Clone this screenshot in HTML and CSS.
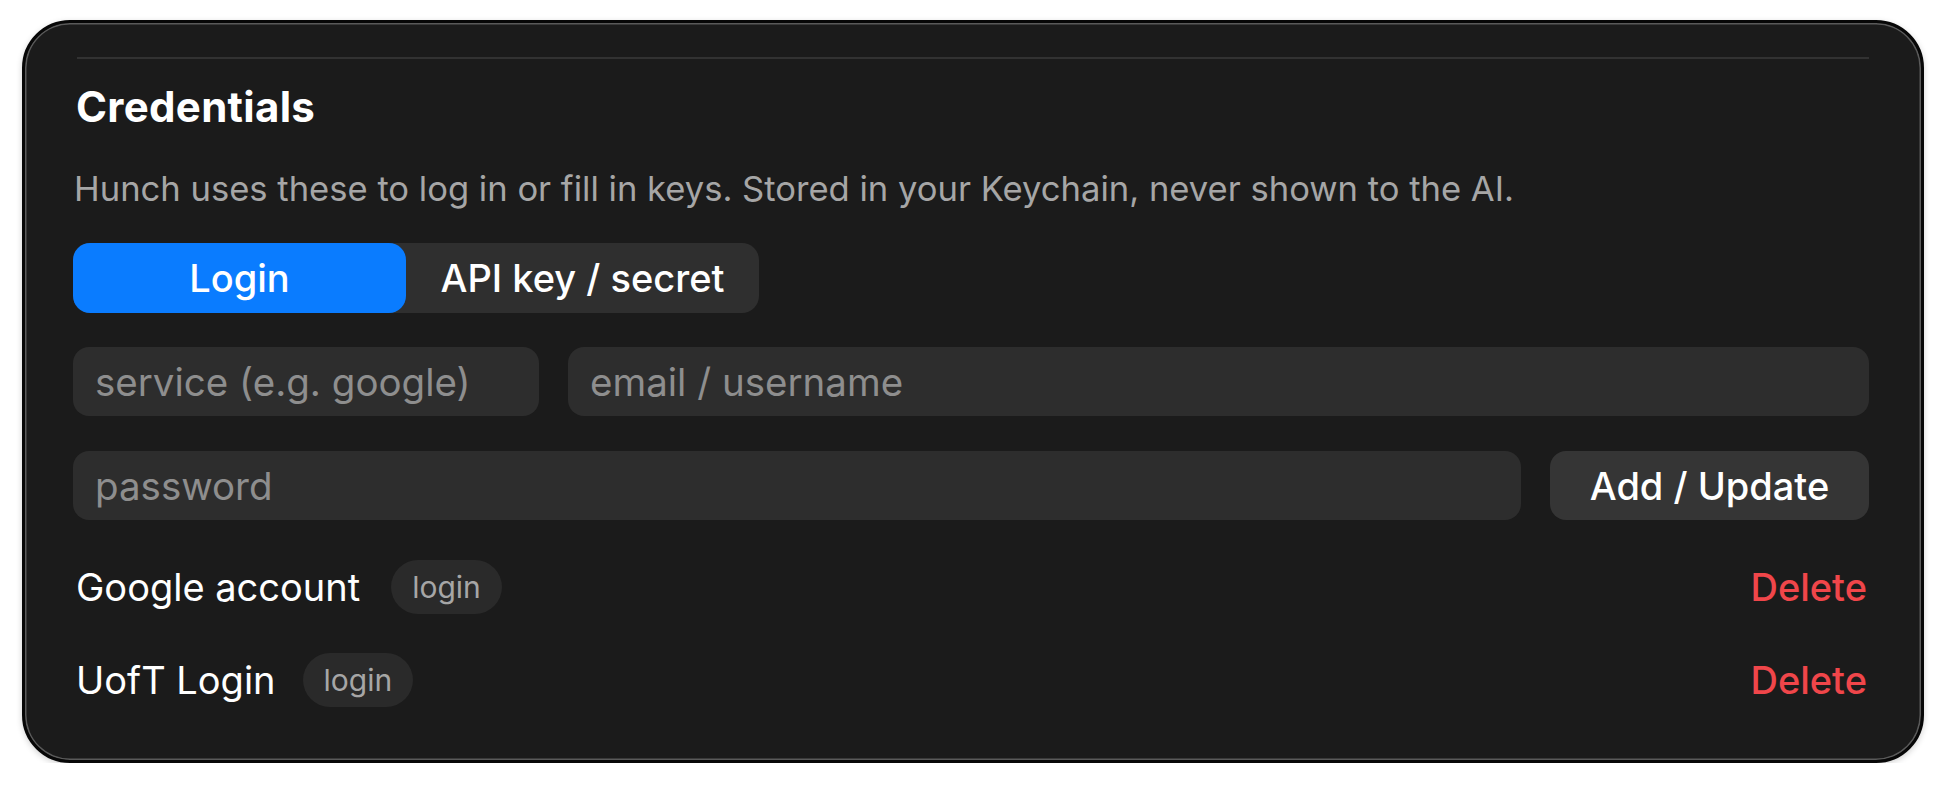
FILE: index.html
```html
<!DOCTYPE html>
<html lang="en">
<head>
<meta charset="utf-8">
<title>Credentials</title>
<link rel="stylesheet" href="styles.css">
</head>
<body>
<div class="wrap">
  <section class="card">
    <div class="divider"></div>
    <h2 class="title">Credentials</h2>
    <p class="subtitle">Hunch uses these to log in or fill in keys. Stored in your Keychain, never shown to the AI.</p>
    <div class="segmented">
      <button class="seg seg-active">Login</button>
      <button class="seg">API key / secret</button>
    </div>
    <div class="form-row">
      <div class="field field-service">service (e.g. google)</div>
      <div class="field field-grow">email / username</div>
    </div>
    <div class="form-row">
      <div class="field field-grow">password</div>
      <button class="btn">Add / Update</button>
    </div>
    <ul class="list">
      <li class="item">
        <span class="item-name">Google account</span>
        <span class="badge">login</span>
        <span class="delete">Delete</span>
      </li>
      <li class="item">
        <span class="item-name">UofT Login</span>
        <span class="badge badge-tight">login</span>
        <span class="delete">Delete</span>
      </li>
    </ul>
  </section>
</div>
</body>
</html>
```

FILE: styles.css
```css
* { box-sizing: border-box; }
html, body {
  margin: 0;
  padding: 0;
  background: #ffffff;
}
body {
  font-family: Inter, "Noto Sans", "Liberation Sans", sans-serif;
  color: #ffffff;
}
.wrap {
  padding: 20px 21px 0 22px;
}
.card {
  width: 1902px;
  height: 743px;
  border: 3px solid #070707;
  border-radius: 48px;
  background: #1b1b1b;
  box-shadow: inset 0 0 0 1.5px #5a5a5a, 0 2px 6px rgba(0,0,0,0.18);
  padding: 34px 52px 0 48px;
}
.divider {
  height: 2px;
  background: #323232;
  margin-left: 4px;
}
.title {
  margin: 23px 0 0 3px;
  font-size: 42px;
  line-height: 50px;
  font-weight: 700;
  letter-spacing: 0.3px;
  color: #ffffff;
}
.subtitle {
  margin: 34px 0 0 1px;
  font-size: 34.6px;
  line-height: 44px;
  color: #a6a6a6;
}
.segmented {
  margin-top: 33px;
  display: flex;
  width: 686px;
  height: 70px;
  background: #2f2f2f;
  border-radius: 17px;
}
.seg {
  font-family: inherit;
  border: 0;
  background: transparent;
  color: #ffffff;
  font-size: 38px;
  font-weight: 500;
  border-radius: 17px;
  padding: 0;
  flex: 1 1 353px;
}
.seg-active {
  flex: 0 0 333px;
  background: #0a7cff;
}
.form-row {
  display: flex;
  gap: 29px;
  margin-top: 34px;
  height: 69px;
}
.form-row + .form-row {
  margin-top: 35px;
}
.field {
  background: #2d2d2d;
  border-radius: 16px;
  color: #8e8e8e;
  font-size: 38.5px;
  display: flex;
  align-items: center;
  padding-left: 22px;
}
.field-service {
  flex: 0 0 466px;
}
.field-grow {
  flex: 1 1 auto;
}
.btn {
  font-family: inherit;
  flex: 0 0 319px;
  border: 0;
  border-radius: 16px;
  background: #353535;
  color: #ffffff;
  font-size: 38px;
  font-weight: 500;
  padding: 0;
}
.list {
  list-style: none;
  margin: 40px 0 0;
  padding: 0;
}
.item {
  display: flex;
  align-items: center;
  height: 54px;
  padding-left: 3px;
}
.item + .item {
  margin-top: 39px;
}
.item-name {
  font-size: 38px;
  color: #ffffff;
}
.badge {
  margin-left: 31px;
  height: 54px;
  padding: 0 21px;
  border-radius: 27px;
  background: #2a2a2a;
  color: #a6a6a6;
  font-size: 30px;
  display: flex;
  align-items: center;
}
.badge-tight {
  margin-left: 27px;
}
.delete {
  margin-left: auto;
  margin-right: 2px;
  color: #f0464a;
  font-size: 38px;
  font-weight: 500;
}
```
